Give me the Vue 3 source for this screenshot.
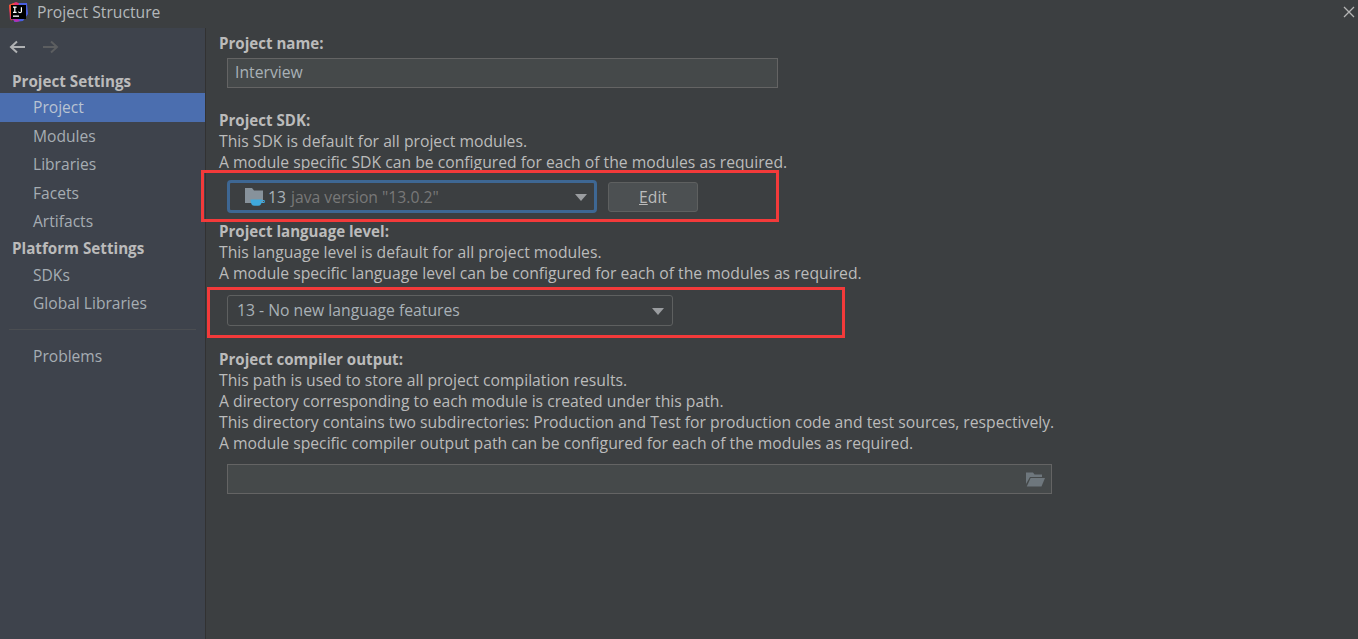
<script setup>
const settings = ['Modules', 'Libraries', 'Facets', 'Artifacts']
const platform = ['SDKs', 'Global Libraries']
</script>

<template>
  <div class="window">
    <header class="titlebar">
      <svg class="logo" width="20" height="20" viewBox="0 0 20 20">
        <path d="M1 3 L8 0 L13 2 L9 10 L2 18 Z" fill="#e8306f" />
        <path d="M1 3 L6 1 L7 12 L3 19 Z" fill="#f26522" opacity="0.8" />
        <path d="M11 1 L19 1 L20 12 L15 19 L6 20 Z" fill="#4a5fe0" />
        <path d="M2 16 L8 20 L12 19 L4 12 Z" fill="#b72fb0" />
        <rect x="3" y="3" width="15" height="14" fill="#000" />
        <rect x="5" y="13.5" width="6" height="1.3" fill="#fff" />
        <path d="M5 5.2 H8.6 M6.8 5.2 V10.4 M5 10.4 H8.6 M13.4 5.2 V9.4 Q13.4 10.6 12 10.6 Q10.8 10.6 10.4 9.6" stroke="#fff" stroke-width="1.2" fill="none" />
      </svg>
      <span class="title">Project Structure</span>
      <svg class="close" width="12" height="12" viewBox="0 0 12 12">
        <path d="M1 1 L11 11 M11 1 L1 11" stroke="#b5b5b5" stroke-width="1.3" />
      </svg>
    </header>

    <div class="body">
      <aside class="sidebar">
        <div class="nav-arrows">
          <svg width="17" height="14" viewBox="0 0 17 14">
            <path d="M16 7 H2 M8 1.5 L2 7 L8 12.5" stroke="#afb1b3" stroke-width="2" fill="none" />
          </svg>
          <svg width="17" height="14" viewBox="0 0 17 14">
            <path d="M1 7 H15 M9 1.5 L15 7 L9 12.5" stroke="#5c5e60" stroke-width="2" fill="none" />
          </svg>
        </div>
        <div class="group first">Project Settings</div>
        <div class="item selected">Project</div>
        <div v-for="s in settings" :key="s" class="item">{{ s }}</div>
        <div class="group">Platform Settings</div>
        <div v-for="p in platform" :key="p" class="item">{{ p }}</div>
        <div class="sep"></div>
        <div class="item">Problems</div>
      </aside>

      <main class="content">
        <section class="sec-name">
          <div class="label">Project name:</div>
          <div class="field name-field">Interview</div>
        </section>

        <section class="sec-sdk">
          <div class="label">Project SDK:</div>
          <div class="line">This SDK is default for all project modules.</div>
          <div class="line">A module specific SDK can be configured for each of the modules as required.</div>
          <div class="row">
            <div class="combo sdk-combo">
              <svg class="sdk-icon" width="20" height="20" viewBox="0 0 20 20">
                <path d="M0 1 H7 L9 3.5 H18 V16 H0 Z" fill="#87929b" />
                <path d="M5.5 12.5 H17 Q17 18.8 13 18.8 H9.5 Q5.5 18.8 5.5 12.5 Z" fill="#3fa9dc" />
                <path d="M17 13.5 H19.3 V15.5 H16.5" stroke="#3fa9dc" stroke-width="1" fill="none" />
              </svg>
              <span class="sdk-num">13</span>
              <span class="sdk-ver">java version "13.0.2"</span>
              <span class="caret"></span>
            </div>
            <button class="edit"><span class="under">E</span>dit</button>
          </div>
        </section>

        <section class="sec-level">
          <div class="label">Project language level:</div>
          <div class="line">This language level is default for all project modules.</div>
          <div class="line">A module specific language level can be configured for each of the modules as required.</div>
          <div class="combo level-combo">
            <span>13 - No new language features</span>
            <span class="caret"></span>
          </div>
        </section>

        <section class="sec-out">
          <div class="label">Project compiler output:</div>
          <div class="line">This path is used to store all project compilation results.</div>
          <div class="line">A directory corresponding to each module is created under this path.</div>
          <div class="line">This directory contains two subdirectories: Production and Test for production code and test sources, respectively.</div>
          <div class="line">A module specific compiler output path can be configured for each of the modules as required.</div>
          <div class="field out-field">
            <svg width="19" height="15" viewBox="0 0 19 15">
              <path d="M0 0.5 H7 L8.5 2.5 H16 V5 H4 L0 12 Z" fill="#6e777d" />
              <path d="M4.6 6 H19 L15.5 14.5 H0.8 Z" fill="#6e777d" />
            </svg>
          </div>
        </section>
      </main>
    </div>

    <div class="mark mark-sdk"></div>
    <div class="mark mark-level"></div>
  </div>
</template>

<style>
html, body { margin: 0; background: #3c3f41; }
</style>

<style scoped>
.window {
  position: relative;
  width: 1358px;
  height: 639px;
  overflow: hidden;
  background: #3c3f41;
  color: #bbbbbb;
  font-family: "Open Sans", "Noto Sans", sans-serif;
  font-size: 15.72px;
  display: flex;
  flex-direction: column;
}
.titlebar {
  box-sizing: border-box;
  height: 28px;
  flex: none;
  display: flex;
  align-items: center;
  padding: 0 0 5px 8px;
  background: #3c3f41;
}
.logo { margin-right: 9px; }
.title { color: #b4b8bb; font-size: 15.7px; }
.close { margin-left: auto; margin-right: 3px; }
.body { flex: 1; display: flex; min-height: 0; }
.sidebar {
  width: 205px;
  flex: none;
  background: #3e434c;
  border-right: 1px solid #323232;
}
.nav-arrows {
  height: 37px;
  display: flex;
  align-items: center;
  gap: 16px;
  padding-left: 9px;
}
.group {
  height: 25px;
  line-height: 25px;
  padding-left: 12px;
  font-size: 15.2px;
  font-weight: 700;
  color: #bbbbbb;
}
.group.first { height: 28px; line-height: 32px; }
.item {
  height: 28.5px;
  line-height: 29.4px;
  padding-left: 33px;
  font-size: 15.6px;
  color: #a6adb3;
}
.item.selected { background: #4b6eaf; color: #b9c3d2; }
.sep { height: 1px; margin: 11px 9px 12px 9px; background: #4b4e52; }
.content { flex: 1; padding-left: 13px; }
.label { font-size: 15.1px; font-weight: 700; line-height: 21px; color: #bbbbbb; }
.line { line-height: 21px; color: #bbbbbb; white-space: nowrap; }
.sec-name { padding-top: 5px; }
.name-field { margin: 4px 0 0 8px; width: 551px; height: 30px; }
.field {
  box-sizing: border-box;
  background: #45494a;
  border: 1px solid #646464;
  color: #a9b1b7;
  padding-left: 7px;
  line-height: 26px;
}
.sec-sdk { padding-top: 22px; }
.row { display: flex; align-items: center; margin: 7px 0 0 8px; }
.combo {
  box-sizing: border-box;
  display: flex;
  align-items: center;
  position: relative;
  background: #3c3f41;
  border: 1px solid #5e6060;
  border-radius: 3px;
  color: #a9b1b7;
}
.sdk-combo {
  width: 370px;
  height: 33px;
  border: 3px solid #3e6793;
  border-radius: 4px;
  padding-left: 15px;
}
.sdk-icon { margin-right: 3px; flex: none; }
.sdk-num { color: #a9b1b7; margin-right: 5px; }
.sdk-ver { color: #787878; }
.caret {
  position: absolute;
  right: 8px;
  top: 50%;
  margin-top: -3px;
  border-left: 6px solid transparent;
  border-right: 6px solid transparent;
  border-top: 7px solid #9a9da0;
}
.sdk-combo .caret { right: 7px; }
.edit {
  box-sizing: border-box;
  width: 90px;
  height: 30px;
  margin: 1px 0 0 11px;
  background: #4c5052;
  border: 1px solid #5e6060;
  border-radius: 3px;
  color: #bbbbbb;
  font: inherit;
  padding: 0;
}
.under { text-decoration: underline; }
.sec-level { padding-top: 8px; }
.level-combo {
  width: 446px;
  height: 31px;
  margin: 11px 0 0 8px;
  padding: 0 0 1px 9px;
}
.sec-out { padding-top: 22px; }
.sec-out .label { line-height: 22px; }
.out-field {
  width: 825px;
  height: 30px;
  margin: 10px 0 0 8px;
  display: flex;
  align-items: center;
  justify-content: flex-end;
  padding-right: 6px;
}
.mark { position: absolute; border: 3px solid #f33a3a; box-sizing: border-box; pointer-events: none; }
.mark-sdk { left: 201px; top: 170px; width: 578px; height: 52px; }
.mark-level { left: 207px; top: 287px; width: 638px; height: 51px; }
</style>
